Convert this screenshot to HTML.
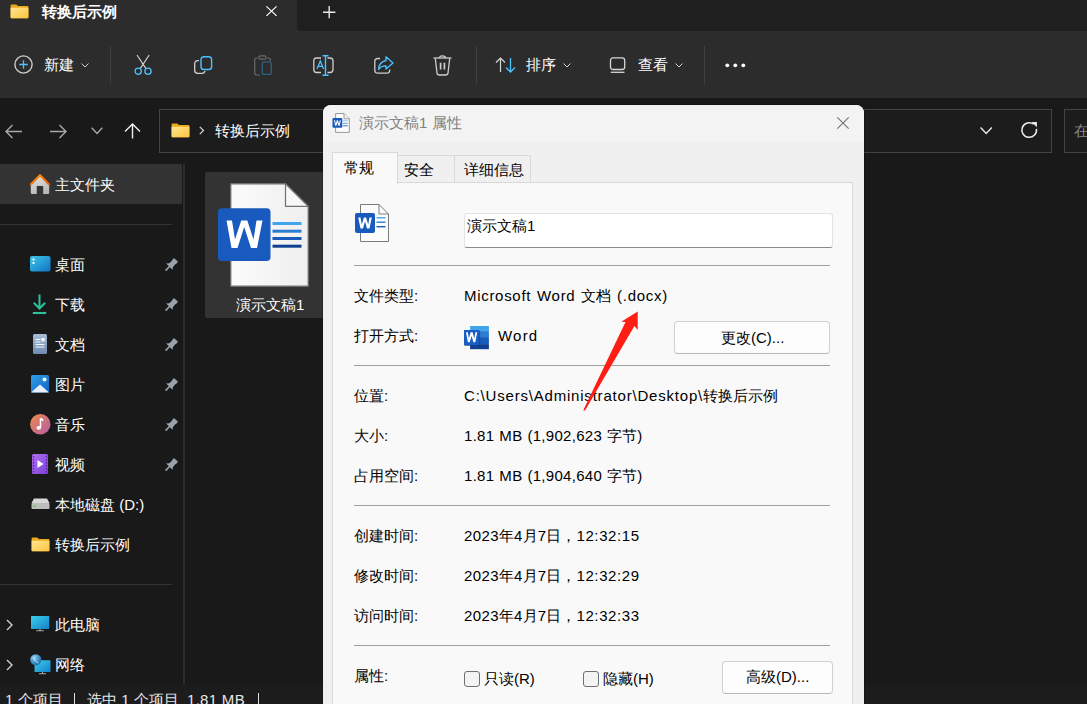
<!DOCTYPE html>
<html><head><meta charset="utf-8">
<style>
*{margin:0;padding:0;box-sizing:border-box}
html,body{width:1087px;height:704px;overflow:hidden;background:#191919;font-family:"Liberation Sans",sans-serif;font-size:15px}
.a{position:absolute}
.t{position:absolute;white-space:nowrap;line-height:20px}
.w{color:#fff}
svg{position:absolute;overflow:visible}
</style></head><body>
<!-- title bar -->
<div class="a" style="left:0;top:0;width:1087px;height:98px;background:#2c2c2c"></div>
<div class="a" style="left:297px;top:0;width:790px;height:31px;background:#1f1f1f;border-bottom-left-radius:4px"></div>


<!-- title content -->
<svg style="left:10px;top:4px" width="19" height="15" viewBox="0 0 19 15">
  <defs><linearGradient id="fg" x1="0" y1="0" x2="1" y2="1"><stop offset="0" stop-color="#ffe695"/><stop offset="1" stop-color="#fcc43c"/></linearGradient></defs>
  <path d="M0.6 1.4 Q0.6 0.4 1.6 0.4 L6.3 0.4 L7.9 2 L17.4 2 Q18.4 2 18.4 3 L18.4 13.3 Q18.4 14.3 17.4 14.3 L1.6 14.3 Q0.6 14.3 0.6 13.3 Z" fill="#eba91e"/>
  <path d="M0.6 3.7 L18.4 3.7 L18.4 13.3 Q18.4 14.3 17.4 14.3 L1.6 14.3 Q0.6 14.3 0.6 13.3 Z" fill="url(#fg)"/>
</svg>
<div class="t w" style="left:42px;top:2px;font-weight:bold">转换后示例</div>
<svg style="left:266px;top:6px" width="11" height="11" viewBox="0 0 11 11"><path d="M0.4 0.4 L10.6 9.9 M10.6 0.4 L0.4 9.9" stroke="#fff" stroke-width="1.2"/></svg>
<svg style="left:323px;top:6px" width="13" height="13" viewBox="0 0 13 13"><path d="M6.2 0 V12.2 M0 6.2 H12.4" stroke="#e8e8e8" stroke-width="1.4"/></svg>

<!-- toolbar content -->
<svg style="left:14px;top:55px" width="19" height="19" viewBox="0 0 19 19"><circle cx="9.5" cy="9.5" r="8.6" fill="none" stroke="#d0d0d0" stroke-width="1.35"/><path d="M9.5 5.2 V13.8 M5.2 9.5 H13.8" stroke="#4cc2ff" stroke-width="1.3"/></svg>
<div class="t w" style="left:44px;top:55px">新建</div>
<svg style="left:81px;top:63px" width="8" height="5" viewBox="0 0 8 5"><path d="M0.5 0.5 L4 4 L7.5 0.5" fill="none" stroke="#cfcfcf" stroke-width="1"/></svg>
<div class="a" style="left:110px;top:46px;width:1px;height:38px;background:#3f3f3f"></div>

<!-- cut -->
<svg style="left:134px;top:55px" width="19" height="21" viewBox="0 0 19 21">
  <path d="M3 0 L11.8 13.4 M15.2 0 L6.4 13.4" stroke="#d8d8d8" stroke-width="1.1" fill="none"/>
  <circle cx="4.2" cy="16.3" r="3.1" fill="none" stroke="#4cc2ff" stroke-width="1.3"/>
  <circle cx="14" cy="16.3" r="3.1" fill="none" stroke="#4cc2ff" stroke-width="1.3"/>
</svg>
<!-- copy -->
<svg style="left:194px;top:56px" width="19" height="19" viewBox="0 0 19 19">
  <path d="M5 4.7 L4 4.7 Q0.7 4.7 0.7 8 L0.7 14.5 Q0.7 17.3 3.7 17.3 L8 17.3 Q10.5 17.3 11 14.8" fill="none" stroke="#cfcfcf" stroke-width="1.3"/>
  <rect x="7" y="0.7" width="10.6" height="12.8" rx="2.8" fill="none" stroke="#4cc2ff" stroke-width="1.4"/>
</svg>
<!-- paste (disabled) -->
<svg style="left:254px;top:55px" width="19" height="21" viewBox="0 0 19 21">
  <path d="M4 3 L2.5 3 Q0.7 3 0.7 5 L0.7 18 Q0.7 20 2.5 20 L6 20" fill="none" stroke="#6b6b6b" stroke-width="1.2"/>
  <path d="M13 3 L14.5 3 Q16.3 3 16.3 5 L16.3 6" fill="none" stroke="#6b6b6b" stroke-width="1.2"/>
  <rect x="5" y="0.8" width="7" height="3.4" rx="1.5" fill="none" stroke="#6b6b6b" stroke-width="1.2"/>
  <rect x="8.3" y="6.8" width="9" height="12.6" rx="2" fill="none" stroke="#2c6283" stroke-width="1.3"/>
</svg>
<!-- rename -->
<svg style="left:313px;top:55px" width="22" height="21" viewBox="0 0 22 21">
  <path d="M8 3 L3.5 3 Q0.8 3 0.8 6 L0.8 14.5 Q0.8 17.5 3.5 17.5 L8 17.5" fill="none" stroke="#cfcfcf" stroke-width="1.3"/>
  <path d="M14.5 3 L17 3 Q20 3 20 6 L20 14.5 Q20 17.5 17 17.5 L14.5 17.5" fill="none" stroke="#cfcfcf" stroke-width="1.3"/>
  <path d="M4 14 L7.3 6 L10.6 14 M5.2 11.3 L9.4 11.3" fill="none" stroke="#4cc2ff" stroke-width="1.3"/>
  <path d="M12.5 0.8 V20.2 M9.5 0.8 H15.5 M9.5 20.2 H15.5" fill="none" stroke="#4cc2ff" stroke-width="1.4"/>
</svg>
<!-- share -->
<svg style="left:374px;top:56px" width="20" height="19" viewBox="0 0 20 19">
  <path d="M6 2.5 L4 2.5 Q0.8 2.5 0.8 5.5 L0.8 14 Q0.8 17.2 4 17.2 L12.5 17.2 Q15.7 17.2 15.7 14 L15.7 13.5" fill="none" stroke="#cfcfcf" stroke-width="1.3"/>
  <path d="M12 0.8 L19 7 L12 13 L12 9.8 Q7 9.6 4.5 13.5 Q5 6 12 4.5 Z" fill="none" stroke="#4cc2ff" stroke-width="1.3" stroke-linejoin="round"/>
</svg>
<!-- delete -->
<svg style="left:433px;top:55px" width="19" height="21" viewBox="0 0 19 21">
  <path d="M6.5 3 Q6.5 0.8 9.5 0.8 Q12.5 0.8 12.5 3" fill="none" stroke="#cfcfcf" stroke-width="1.2"/>
  <path d="M0.5 3 H18.5" stroke="#cfcfcf" stroke-width="1.3"/>
  <path d="M2.3 3.5 L4 18 Q4.2 20 6.5 20 L12.5 20 Q14.8 20 15 18 L16.7 3.5" fill="none" stroke="#cfcfcf" stroke-width="1.3"/>
  <path d="M7.6 7.8 V14.6 M11.4 7.8 V14.6" stroke="#cfcfcf" stroke-width="1.7"/>
</svg>
<div class="a" style="left:476px;top:46px;width:1px;height:38px;background:#3f3f3f"></div>
<!-- sort -->
<svg style="left:495px;top:56px" width="23" height="18" viewBox="0 0 23 18">
  <path d="M5.5 16 V2 M1 6.5 L5.5 2 L10 6.5" fill="none" stroke="#d6d6d6" stroke-width="1.2"/>
  <path d="M15.5 2 V16 M11 11.5 L15.5 16 L20 11.5" fill="none" stroke="#4cc2ff" stroke-width="1.3"/>
</svg>
<div class="t w" style="left:526px;top:55px">排序</div>
<svg style="left:563px;top:63px" width="8" height="5" viewBox="0 0 8 5"><path d="M0.5 0.5 L4 4 L7.5 0.5" fill="none" stroke="#cfcfcf" stroke-width="1"/></svg>
<!-- view -->
<svg style="left:609px;top:57px" width="17" height="17" viewBox="0 0 17 17">
  <rect x="1.5" y="0.9" width="14.2" height="11.6" rx="2.5" fill="none" stroke="#d6d6d6" stroke-width="1.3"/>
  <path d="M1.8 15.3 H15.5" stroke="#d6d6d6" stroke-width="1.3"/>
</svg>
<div class="t w" style="left:638px;top:55px">查看</div>
<svg style="left:675px;top:63px" width="8" height="5" viewBox="0 0 8 5"><path d="M0.5 0.5 L4 4 L7.5 0.5" fill="none" stroke="#cfcfcf" stroke-width="1"/></svg>
<div class="a" style="left:704px;top:46px;width:1px;height:38px;background:#3f3f3f"></div>
<svg style="left:724px;top:63px" width="23" height="5" viewBox="0 0 23 5"><circle cx="3.3" cy="2.3" r="1.9" fill="#fff"/><circle cx="11.3" cy="2.3" r="1.9" fill="#fff"/><circle cx="19.3" cy="2.3" r="1.9" fill="#fff"/></svg>

<!-- toolbar -->
<!-- address row -->
<div class="a" style="left:0;top:98px;width:1087px;height:62px;background:#191919"></div>

<!-- nav pane divider -->
<div class="a" style="left:182px;top:164px;width:4px;height:521px;background:#171717"></div><div class="a" style="left:183px;top:164px;width:2px;height:521px;background:#2d2d2d"></div>
<!-- status bar -->
<div class="a" style="left:0;top:685px;width:1087px;height:19px;background:#1c1c1c"></div>


<!-- address row content -->
<svg style="left:5px;top:124px" width="18" height="15" viewBox="0 0 18 15"><path d="M17 7.5 H1.5 M7.5 1 L1 7.5 L7.5 14" fill="none" stroke="#a8a8a8" stroke-width="1.4"/></svg>
<svg style="left:49px;top:124px" width="18" height="15" viewBox="0 0 18 15"><path d="M1 7.5 H16.5 M10.5 1 L17 7.5 L10.5 14" fill="none" stroke="#a8a8a8" stroke-width="1.4"/></svg>
<svg style="left:91px;top:127px" width="12" height="8" viewBox="0 0 12 8"><path d="M0.7 0.7 L6 6.5 L11.3 0.7" fill="none" stroke="#a8a8a8" stroke-width="1.4"/></svg>
<svg style="left:124px;top:123px" width="17" height="16" viewBox="0 0 17 16"><path d="M8.5 15.5 V1.5 M1 8.5 L8.5 1 L16 8.5" fill="none" stroke="#f0f0f0" stroke-width="1.4"/></svg>
<div class="a" style="left:159px;top:109px;width:893px;height:44px;border:1px solid #444;background:#1c1c1c"></div>
<div class="a" style="left:1064px;top:109px;width:40px;height:44px;border:1px solid #444;background:#1c1c1c"></div>
<div class="t" style="left:1074px;top:121px;color:#8a8a8a">在</div>
<svg style="left:171px;top:123px" width="19" height="15" viewBox="0 0 19 15">
  <path d="M0.6 1.4 Q0.6 0.4 1.6 0.4 L6.3 0.4 L7.9 2 L17.4 2 Q18.4 2 18.4 3 L18.4 13.3 Q18.4 14.3 17.4 14.3 L1.6 14.3 Q0.6 14.3 0.6 13.3 Z" fill="#eba91e"/>
  <path d="M0.6 3.7 L18.4 3.7 L18.4 13.3 Q18.4 14.3 17.4 14.3 L1.6 14.3 Q0.6 14.3 0.6 13.3 Z" fill="url(#fg)"/>
</svg>
<svg style="left:199px;top:126px" width="6" height="9" viewBox="0 0 6 9"><path d="M0.8 0.8 L4.5 4.5 L0.8 8.2" fill="none" stroke="#d8d8d8" stroke-width="1.2"/></svg>
<div class="t w" style="left:215px;top:121px">转换后示例</div>
<svg style="left:980px;top:127px" width="13" height="8" viewBox="0 0 13 8"><path d="M0.6 0.6 L6.2 6.5 L11.8 0.6" fill="none" stroke="#e6e6e6" stroke-width="1.5"/></svg>
<svg style="left:1020px;top:121px" width="18" height="18" viewBox="0 0 18 18"><path d="M13.6 3.2 A7.3 7.3 0 1 0 16.4 7.8" fill="none" stroke="#ececec" stroke-width="1.5"/><path d="M11.6 0.9 L16.9 0.9 L16.9 6.2 Z" fill="#ececec"/></svg>

<!-- nav pane -->
<div class="a" style="left:0;top:164px;width:182px;height:40px;background:#333333;border-radius:0 2px 2px 0"></div>
<svg style="left:30px;top:173px" width="20" height="22" viewBox="0 0 20 22">
  <defs><linearGradient id="hg" x1="0" y1="0" x2="0.3" y2="1"><stop offset="0" stop-color="#e6e6e6"/><stop offset="1" stop-color="#b9b9b9"/></linearGradient>
  <linearGradient id="rg" x1="0" y1="0" x2="1" y2="1"><stop offset="0" stop-color="#ff9a10"/><stop offset="1" stop-color="#e8580a"/></linearGradient></defs>
  <path d="M0.8 11.5 L10 3 L19.2 11.5 L19.2 19.8 Q19.2 21 18 21 L13.2 21 L13.2 13 L6.8 13 L6.8 21 L2 21 Q0.8 21 0.8 19.8 Z" fill="url(#hg)"/>
  <path d="M1 11.2 L10 2.2 L19 11.2" fill="none" stroke="url(#rg)" stroke-width="2.2" stroke-linejoin="round" stroke-linecap="round"/>
</svg>
<div class="t w" style="left:55px;top:175px">主文件夹</div>
<div class="a" style="left:0;top:224px;width:172px;height:1px;background:#333"></div>

<svg style="left:30px;top:256px" width="21" height="16" viewBox="0 0 21 16">
  <defs><linearGradient id="dg" x1="0" y1="0" x2="1" y2="1"><stop offset="0" stop-color="#3ec6ea"/><stop offset="1" stop-color="#0f74c4"/></linearGradient></defs>
  <rect x="0" y="0" width="20.5" height="15.5" rx="2" fill="url(#dg)"/>
  <rect x="2.5" y="2.5" width="2" height="2" fill="#fff"/><rect x="2.5" y="6" width="2" height="2" fill="#fff"/>
</svg>
<div class="t w" style="left:55px;top:255px">桌面</div>
<svg style="left:32px;top:294px" width="16" height="21" viewBox="0 0 16 21">
  <path d="M7.5 0.5 V14.5 M1.8 8.8 L7.5 14.5 L13.2 8.8" fill="none" stroke="#2ec29a" stroke-width="2"/>
  <path d="M0.8 19 H14.2" stroke="#2ec29a" stroke-width="2.1"/>
</svg>
<div class="t w" style="left:55px;top:295px">下载</div>
<svg style="left:33px;top:334px" width="14" height="20" viewBox="0 0 14 20">
  <defs><linearGradient id="docg" x1="0" y1="0" x2="0" y2="1"><stop offset="0" stop-color="#a9bdd6"/><stop offset="1" stop-color="#6f8bb0"/></linearGradient></defs>
  <rect x="0" y="0" width="14" height="20" rx="1.5" fill="url(#docg)"/>
  <path d="M2.5 5.5 H7.5 M2.5 8 H7.5 M2.5 10.5 H11.5 M2.5 13 H11.5" stroke="#f4f7fb" stroke-width="1.1"/>
  <rect x="8.5" y="4" width="3.2" height="3.4" fill="#f4f7fb"/>
</svg>
<div class="t w" style="left:55px;top:335px">文档</div>
<svg style="left:31px;top:375px" width="18" height="18" viewBox="0 0 18 18">
  <defs><linearGradient id="pg" x1="0" y1="0" x2="1" y2="1"><stop offset="0" stop-color="#2fa0e8"/><stop offset="1" stop-color="#1464c0"/></linearGradient></defs>
  <rect x="0" y="0" width="18" height="17.5" rx="1.5" fill="url(#pg)"/>
  <path d="M0 17.5 L9 9.5 L18 17.5 Z" fill="#e8f1fb"/>
  <circle cx="13.5" cy="4.5" r="2" fill="#fff"/>
</svg>
<div class="t w" style="left:55px;top:375px">图片</div>
<svg style="left:30px;top:414px" width="21" height="21" viewBox="0 0 21 21">
  <defs><linearGradient id="mg" x1="0" y1="0" x2="1" y2="1"><stop offset="0" stop-color="#f08a4b"/><stop offset="1" stop-color="#b25ca8"/></linearGradient></defs>
  <circle cx="10.3" cy="10.3" r="10.2" fill="url(#mg)"/>
  <path d="M10.5 4.5 V13.5 M10.5 4.5 Q12.5 5 13 7" fill="none" stroke="#fff" stroke-width="1.5"/>
  <ellipse cx="8.8" cy="13.8" rx="2.3" ry="1.9" fill="#fff"/>
</svg>
<div class="t w" style="left:55px;top:415px">音乐</div>
<svg style="left:32px;top:454px" width="16" height="20" viewBox="0 0 16 20">
  <defs><linearGradient id="vg" x1="0" y1="0" x2="1" y2="1"><stop offset="0" stop-color="#b070f0"/><stop offset="1" stop-color="#7b3fd8"/></linearGradient></defs>
  <rect x="0" y="0" width="16" height="20" rx="1.5" fill="url(#vg)"/>
  <path d="M1.5 2 V18 M14.5 2 V18" stroke="#5b2aa8" stroke-width="1.4" stroke-dasharray="1.5 1.5"/>
  <path d="M5.5 6 L11.5 10 L5.5 14 Z" fill="#fff"/>
</svg>
<div class="t w" style="left:55px;top:455px">视频</div>
<svg style="left:31px;top:498px" width="19" height="12" viewBox="0 0 19 12">
  <path d="M3 0.5 L16 0.5 L18.5 5 L0.5 5 Z" fill="#d9d9d9"/>
  <rect x="0.5" y="5" width="18" height="6" rx="1" fill="#bdbdbd"/>
  <rect x="2.5" y="7.2" width="2" height="1.6" fill="#39d353"/>
</svg>
<div class="t w" style="left:55px;top:495px">本地磁盘 (D:)</div>
<svg style="left:31px;top:537px" width="19" height="15" viewBox="0 0 19 15">
  <path d="M0.6 1.4 Q0.6 0.4 1.6 0.4 L6.3 0.4 L7.9 2 L17.4 2 Q18.4 2 18.4 3 L18.4 13.3 Q18.4 14.3 17.4 14.3 L1.6 14.3 Q0.6 14.3 0.6 13.3 Z" fill="#eba91e"/>
  <path d="M0.6 3.7 L18.4 3.7 L18.4 13.3 Q18.4 14.3 17.4 14.3 L1.6 14.3 Q0.6 14.3 0.6 13.3 Z" fill="url(#fg)"/>
</svg>
<div class="t w" style="left:55px;top:535px">转换后示例</div>
<div class="a" style="left:0;top:584px;width:172px;height:1px;background:#333"></div>
<svg style="left:6px;top:619px" width="8" height="12" viewBox="0 0 8 12"><path d="M1 1 L6 6 L1 11" fill="none" stroke="#cfcfcf" stroke-width="1.4"/></svg>
<svg style="left:31px;top:616px" width="19" height="16" viewBox="0 0 19 16">
  <defs><linearGradient id="pcg" x1="0" y1="0" x2="1" y2="1"><stop offset="0" stop-color="#3ad0ee"/><stop offset="1" stop-color="#1580c8"/></linearGradient></defs>
  <rect x="0" y="0" width="18.2" height="13" rx="0.6" fill="url(#pcg)"/>
  <path d="M9 13 V14.6 M5.2 14.8 H12.8" stroke="#a8a8a8" stroke-width="1.1"/>
</svg>
<div class="t w" style="left:55px;top:615px">此电脑</div>
<svg style="left:6px;top:659px" width="8" height="12" viewBox="0 0 8 12"><path d="M1 1 L6 6 L1 11" fill="none" stroke="#cfcfcf" stroke-width="1.4"/></svg>
<svg style="left:30px;top:654px" width="21" height="21" viewBox="0 0 21 21">
  <defs><radialGradient id="glg" cx="0.35" cy="0.3" r="0.8"><stop offset="0" stop-color="#9ad2f2"/><stop offset="0.6" stop-color="#3a8cc8"/><stop offset="1" stop-color="#1f5f98"/></radialGradient></defs>
  <rect x="4.5" y="6.2" width="16" height="11.8" rx="0.6" fill="url(#pcg)"/>
  <path d="M12.5 18 V19.6 M9 19.8 H16" stroke="#a8a8a8" stroke-width="1.1"/>
  <circle cx="5.8" cy="5.8" r="5.6" fill="url(#glg)"/>
  <path d="M3 3.5 Q5 4.5 5 6.5 Q6.5 8 8.5 9" fill="none" stroke="#e0f2fc" stroke-width="1" opacity="0.8"/>
</svg>
<div class="t w" style="left:55px;top:655px">网络</div>
<svg style="left:165px;top:258px" width="14" height="14" viewBox="0 0 14 14"><path d="M1.1 5.6 Q4.8 5.6 6.2 3.4 L8.2 0.7 Q9 0 9.8 0.7 L12.5 3.3 Q13.1 4.1 12.4 4.8 L9.6 6.9 Q7.5 8.3 7.5 11.7 Z" fill="#9aa3a9"/><path d="M4.8 8.3 L1 12.1" stroke="#9aa3a9" stroke-width="1.6" stroke-linecap="round"/></svg>
<svg style="left:165px;top:298px" width="14" height="14" viewBox="0 0 14 14"><path d="M1.1 5.6 Q4.8 5.6 6.2 3.4 L8.2 0.7 Q9 0 9.8 0.7 L12.5 3.3 Q13.1 4.1 12.4 4.8 L9.6 6.9 Q7.5 8.3 7.5 11.7 Z" fill="#9aa3a9"/><path d="M4.8 8.3 L1 12.1" stroke="#9aa3a9" stroke-width="1.6" stroke-linecap="round"/></svg>
<svg style="left:165px;top:338px" width="14" height="14" viewBox="0 0 14 14"><path d="M1.1 5.6 Q4.8 5.6 6.2 3.4 L8.2 0.7 Q9 0 9.8 0.7 L12.5 3.3 Q13.1 4.1 12.4 4.8 L9.6 6.9 Q7.5 8.3 7.5 11.7 Z" fill="#9aa3a9"/><path d="M4.8 8.3 L1 12.1" stroke="#9aa3a9" stroke-width="1.6" stroke-linecap="round"/></svg>
<svg style="left:165px;top:378px" width="14" height="14" viewBox="0 0 14 14"><path d="M1.1 5.6 Q4.8 5.6 6.2 3.4 L8.2 0.7 Q9 0 9.8 0.7 L12.5 3.3 Q13.1 4.1 12.4 4.8 L9.6 6.9 Q7.5 8.3 7.5 11.7 Z" fill="#9aa3a9"/><path d="M4.8 8.3 L1 12.1" stroke="#9aa3a9" stroke-width="1.6" stroke-linecap="round"/></svg>
<svg style="left:165px;top:418px" width="14" height="14" viewBox="0 0 14 14"><path d="M1.1 5.6 Q4.8 5.6 6.2 3.4 L8.2 0.7 Q9 0 9.8 0.7 L12.5 3.3 Q13.1 4.1 12.4 4.8 L9.6 6.9 Q7.5 8.3 7.5 11.7 Z" fill="#9aa3a9"/><path d="M4.8 8.3 L1 12.1" stroke="#9aa3a9" stroke-width="1.6" stroke-linecap="round"/></svg>
<svg style="left:165px;top:458px" width="14" height="14" viewBox="0 0 14 14"><path d="M1.1 5.6 Q4.8 5.6 6.2 3.4 L8.2 0.7 Q9 0 9.8 0.7 L12.5 3.3 Q13.1 4.1 12.4 4.8 L9.6 6.9 Q7.5 8.3 7.5 11.7 Z" fill="#9aa3a9"/><path d="M4.8 8.3 L1 12.1" stroke="#9aa3a9" stroke-width="1.6" stroke-linecap="round"/></svg>

<!-- content: selected file -->
<div class="a" style="left:205px;top:172px;width:130px;height:146px;background:#333333;border-radius:2px"></div>
<svg style="left:218px;top:183px" width="92" height="105" viewBox="0 0 92 105">
  <defs><linearGradient id="pageg" x1="0" y1="0" x2="1" y2="0"><stop offset="0" stop-color="#fbfbfb"/><stop offset="1" stop-color="#efefef"/></linearGradient></defs>
  <path d="M12.8 0.8 L67.5 0.8 L90.2 23.3 L90.2 103.2 L12.8 103.2 Z" fill="url(#pageg)" stroke="#74706c" stroke-width="1.2"/>
  <path d="M67.5 0.8 L67.5 23.3 L90.2 23.3 Z" fill="#f7f7f7" stroke="#74706c" stroke-width="1.2" stroke-linejoin="round"/>
  <rect x="54.5" y="39" width="29" height="3" fill="#41a5ee"/>
  <rect x="54.5" y="46.7" width="29" height="3" fill="#2b7cd3"/>
  <rect x="54.5" y="54" width="29" height="3" fill="#185abd"/>
  <rect x="54.5" y="61.7" width="29" height="3" fill="#103f91"/>
  <rect x="0" y="25.3" width="52.5" height="52.7" rx="4" fill="#185abd"/>
  <path d="M8.5 37.5 L13.5 65 L19.5 65 L26.2 44 L33 65 L39 65 L44.5 37.5 L38.5 37.5 L35.5 56.5 L29.3 37.5 L23.2 37.5 L17 56.5 L14 37.5 Z" fill="#fff"/>
</svg>
<div class="t w" style="left:236px;top:295px">演示文稿1</div>

<!-- status bar text -->
<div class="t" style="left:5px;top:690px;color:#e6e6e6">1 个项目</div>
<div class="a" style="left:74px;top:693px;width:1px;height:12px;background:#e0e0e0"></div>
<div class="t" style="left:87px;top:690px;color:#e6e6e6">选中 1 个项目</div>
<div class="t" style="left:187px;top:690px;color:#e6e6e6;letter-spacing:0.3px">1.81 MB</div>
<div class="a" style="left:258px;top:693px;width:1px;height:12px;background:#e0e0e0"></div>
<!-- dialog -->
<div class="a" style="left:323px;top:105px;width:541px;height:620px;background:#f0f0f0;border-radius:8px;overflow:hidden;box-shadow:0 0 0 1px rgba(0,0,0,0.25)">
  <div class="a" style="left:0;top:0;width:541px;height:37px;background:#f3f3f3"></div>
</div>
<svg style="left:332px;top:113px" width="19" height="20" viewBox="0 0 19 20">
  <path d="M3.6 0.5 L12 0.5 L17.3 5.8 L17.3 19.4 L3.6 19.4 Z" fill="#fcfcfc" stroke="#9a9a9a" stroke-width="1"/>
  <path d="M12 0.5 L12 5.8 L17.3 5.8" fill="#f0f0f0" stroke="#9a9a9a" stroke-width="1"/>
  <path d="M11 7.8 H15.8" stroke="#7cc3f2" stroke-width="1"/><path d="M11 10.3 H15.8" stroke="#6a9fd8" stroke-width="1"/><path d="M11 12.8 H15.8" stroke="#4a6fb0" stroke-width="1"/>
  <rect x="0.5" y="5" width="9.8" height="9.8" rx="1" fill="#185abd"/>
  <path d="M2 7.2 L3.2 12.8 L4.4 12.8 L5.4 9.2 L6.4 12.8 L7.6 12.8 L8.8 7.2 L7.7 7.2 L7 10.8 L5.95 7.2 L4.85 7.2 L3.8 10.8 L3.1 7.2 Z" fill="#fff"/>
</svg>
<div class="t" style="left:359px;top:113px;color:#7e7e7e">演示文稿1 属性</div>
<svg style="left:837px;top:117px" width="12" height="12" viewBox="0 0 12 12"><path d="M0.3 0.3 L11.7 11.7 M11.7 0.3 L0.3 11.7" stroke="#707070" stroke-width="1.05"/></svg>

<!-- tabs -->
<div class="a" style="left:397px;top:155px;width:58px;height:28px;background:#f0f0f0;border:1px solid #d9d9d9;border-bottom:none"></div>
<div class="a" style="left:454px;top:155px;width:77px;height:28px;background:#f0f0f0;border:1px solid #d9d9d9;border-bottom:none"></div>
<div class="a" style="left:332px;top:182px;width:521px;height:540px;background:#f9f9f9;border:1px solid #d9d9d9"></div>
<div class="a" style="left:332px;top:152px;width:66px;height:32px;background:#f9f9f9;border:1px solid #d9d9d9;border-bottom:none"></div>
<div class="t" style="left:344px;top:158px;color:#000">常规</div>
<div class="t" style="left:404px;top:160px;color:#000">安全</div>
<div class="t" style="left:464px;top:160px;color:#000">详细信息</div>

<!-- big icon -->
<svg style="left:355px;top:204px" width="35" height="38" viewBox="0 0 35 38">
  <path d="M5.5 0.5 L24 0.5 L33.5 10 L33.5 37.5 L5.5 37.5 Z" fill="#fcfcfc" stroke="#7a7a7a" stroke-width="1"/>
  <path d="M24 0.5 L24 10 L33.5 10" fill="none" stroke="#7a7a7a" stroke-width="1"/>
  <path d="M21.5 13.8 H30.5" stroke="#41a5ee" stroke-width="1.4"/><path d="M21.5 18.2 H30.5" stroke="#2b7cd3" stroke-width="1.4"/><path d="M21.5 22.7 H30.5" stroke="#185abd" stroke-width="1.4"/>
  <rect x="0" y="9" width="20" height="20" rx="2" fill="#185abd"/>
  <path d="M3.2 13.5 L5.5 24.5 L8 24.5 L10 17.5 L12 24.5 L14.5 24.5 L16.8 13.5 L14.5 13.5 L13.2 20.5 L11.1 13.5 L8.9 13.5 L6.8 20.5 L5.5 13.5 Z" fill="#fff"/>
</svg>
<!-- name input -->
<div class="a" style="left:464px;top:213px;width:369px;height:35px;background:#fff;border:1px solid #e3e3e3;border-bottom:1px solid #8a8a8a;border-radius:3px"></div>
<div class="t" style="left:467px;top:216px;color:#000">演示文稿1</div>

<div class="a" style="left:354px;top:265px;width:476px;height:1px;background:#a0a0a0"></div>
<div class="a" style="left:354px;top:365px;width:476px;height:1px;background:#a0a0a0"></div>
<div class="a" style="left:354px;top:505px;width:476px;height:1px;background:#a0a0a0"></div>
<div class="a" style="left:354px;top:645px;width:476px;height:1px;background:#a0a0a0"></div>

<div class="t" style="left:354px;top:286px;color:#000">文件类型:</div>
<div class="t" style="left:464px;top:286px;color:#000"><span style="letter-spacing:0.7px;word-spacing:1px">Microsoft Word </span>文档<span style="letter-spacing:0.7px;word-spacing:1px"> (.docx)</span></div>
<div class="t" style="left:354px;top:326px;color:#000">打开方式:</div>
<svg style="left:464px;top:326px" width="25" height="24" viewBox="0 0 25 24">
  <rect x="6.1" y="0" width="18.8" height="5.1" fill="#41a5ee"/>
  <rect x="6.1" y="5.1" width="18.8" height="6" fill="#2b7cd3"/>
  <rect x="6.1" y="11.1" width="18.8" height="7" fill="#185abd"/>
  <rect x="6.1" y="18.1" width="18.8" height="5.1" fill="#103f91"/>
  <rect x="0.8" y="4.8" width="15.3" height="15.2" fill="#0e3478" opacity="0.6"/>
  <rect x="0" y="4" width="15.3" height="15.2" fill="#1a5cc0"/>
  <path d="M2 6.3 L3.9 16.3 L5.8 16.3 L7.6 10 L9.4 16.3 L11.3 16.3 L13.2 6.3 L11.4 6.3 L10.3 12.6 L8.6 6.3 L6.6 6.3 L4.9 12.6 L3.8 6.3 Z" fill="#fff"/>
</svg>
<div class="t" style="left:498px;top:326px;color:#000;letter-spacing:1.2px">Word</div>
<div class="a" style="left:674px;top:321px;width:156px;height:33px;background:#fdfdfd;border:1px solid #d0d0d0;border-bottom-color:#b8b8b8;border-radius:4px"></div>
<div class="t" style="left:721px;top:328px;color:#000">更改(C)...</div>

<div class="t" style="left:354px;top:386px;color:#000">位置:</div>
<div class="t" style="left:464px;top:386px;color:#000"><span style="letter-spacing:0.8px">C:\Users\Administrator\Desktop\</span>转换后示例</div>
<div class="t" style="left:354px;top:426px;color:#000">大小:</div>
<div class="t" style="left:464px;top:426px;color:#000"><span style="letter-spacing:0.3px;word-spacing:0.5px">1.81 MB (1,902,623 </span>字节)</div>
<div class="t" style="left:354px;top:466px;color:#000">占用空间:</div>
<div class="t" style="left:464px;top:466px;color:#000"><span style="letter-spacing:0.3px;word-spacing:0.5px">1.81 MB (1,904,640 </span>字节)</div>

<div class="t" style="left:354px;top:526px;color:#000">创建时间:</div>
<div class="t" style="left:464px;top:526px;color:#000"><span style="letter-spacing:0.4px">2023</span>年<span style="letter-spacing:0.4px">4</span>月<span style="letter-spacing:0.4px">7</span>日，<span style="letter-spacing:0.6px">12:32:15</span></div>
<div class="t" style="left:354px;top:566px;color:#000">修改时间:</div>
<div class="t" style="left:464px;top:566px;color:#000"><span style="letter-spacing:0.4px">2023</span>年<span style="letter-spacing:0.4px">4</span>月<span style="letter-spacing:0.4px">7</span>日，<span style="letter-spacing:0.6px">12:32:29</span></div>
<div class="t" style="left:354px;top:606px;color:#000">访问时间:</div>
<div class="t" style="left:464px;top:606px;color:#000"><span style="letter-spacing:0.4px">2023</span>年<span style="letter-spacing:0.4px">4</span>月<span style="letter-spacing:0.4px">7</span>日，<span style="letter-spacing:0.6px">12:32:33</span></div>

<div class="t" style="left:354px;top:666px;color:#000">属性:</div>
<div class="a" style="left:464px;top:671px;width:16px;height:16px;background:#f3f3f3;border:1px solid #707070;border-radius:3px"></div>
<div class="t" style="left:484px;top:669px;color:#000">只读(R)</div>
<div class="a" style="left:583px;top:671px;width:16px;height:16px;background:#f3f3f3;border:1px solid #707070;border-radius:3px"></div>
<div class="t" style="left:603px;top:669px;color:#000">隐藏(H)</div>
<div class="a" style="left:722px;top:661px;width:111px;height:33px;background:#fdfdfd;border:1px solid #d0d0d0;border-bottom-color:#b8b8b8;border-radius:4px"></div>
<div class="t" style="left:746px;top:667px;color:#000">高级(D)...</div>

<!-- red arrow -->
<svg style="left:0;top:0" width="1087" height="704" viewBox="0 0 1087 704">
  <path d="M583.3 410.3 L625.5 321.9 L621.2 321.7 L637.7 311.6 L637.7 330 L634.4 326 L585 410.6 Z" fill="#ff1e14"/>
</svg>
</body></html>
